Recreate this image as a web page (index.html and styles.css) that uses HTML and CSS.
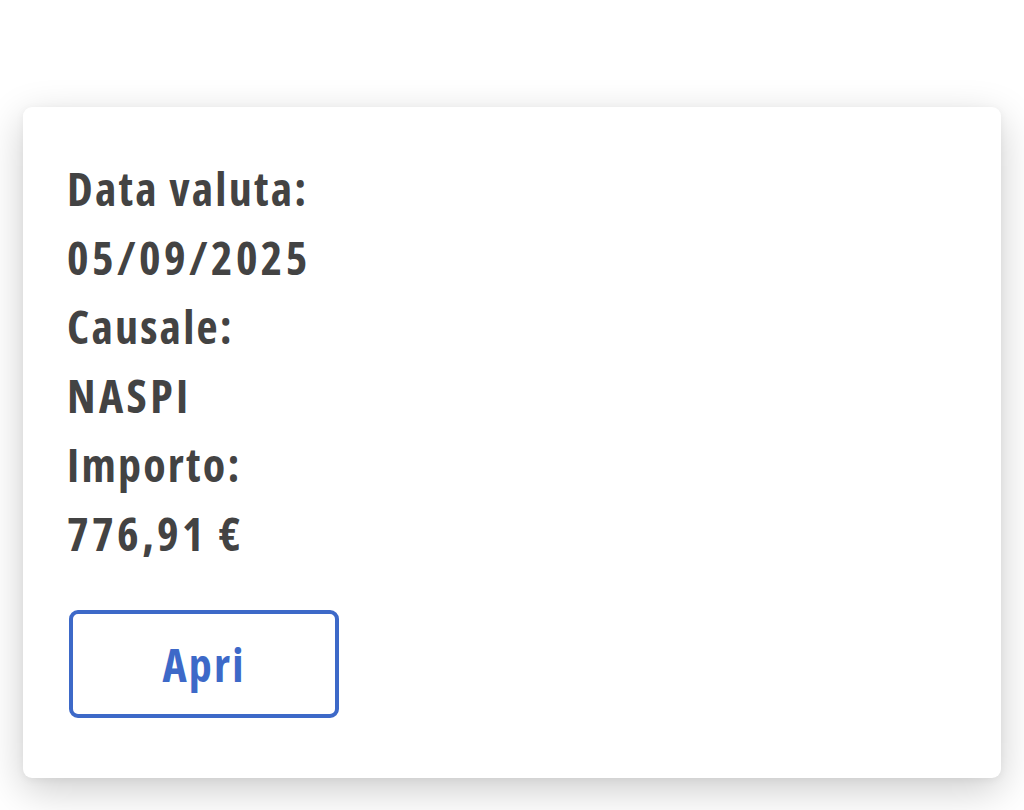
FILE: index.html
```html
<!DOCTYPE html>
<html lang="it">
<head>
    <meta charset="UTF-8">
    <meta name="viewport" content="width=device-width, initial-scale=1.0">
    <title>Pagamento</title>
    <link rel="stylesheet" href="styles.css">
</head>
<body>

    <!-- scheda pagamento -->
    <div class="card">
        <p class="label">Data valuta:</p>
        <p class="value">05/09/2025</p>
        <p class="label">Causale:</p>
        <p class="value">NASPI</p>
        <p class="label">Importo:</p>
        <p class="value">776,91 €</p>
        <button class="btn-open">Apri</button>
    </div>

</body>
</html>
```
FILE: styles.css
```css
body {
    margin: 0;
    min-height: 810px;
    background: #fff;
    font-family: "Open Sans", "Noto Sans", sans-serif;
    font-stretch: 75%;
    color: #434343;
}
.card {
    margin: 107px 23px 0;
    height: 671px;
    box-sizing: border-box;
    padding: 47px 44px 0 44px;
    background: #fff;
    border-radius: 9px;
    box-shadow: 0 12px 40px rgba(0, 0, 0, 0.2), 0 2px 8px rgba(0, 0, 0, 0.05);
}
.label, .value {
    margin: 0;
    font-size: 46px;
    font-weight: 700;
    line-height: 69px;
    letter-spacing: 2.2px;
}
.value {
    letter-spacing: 3.4px;
}
.btn-open {
    display: block;
    width: 270px;
    height: 108px;
    margin-top: 42px;
    margin-left: 2px;
    background: #fff;
    border: 4px solid #3d69c8;
    border-radius: 9px;
    color: #3d69c8;
    font-family: inherit;
    font-stretch: 75%;
    font-size: 46px;
    font-weight: 700;
    letter-spacing: 2.2px;
    cursor: pointer;
}
```
